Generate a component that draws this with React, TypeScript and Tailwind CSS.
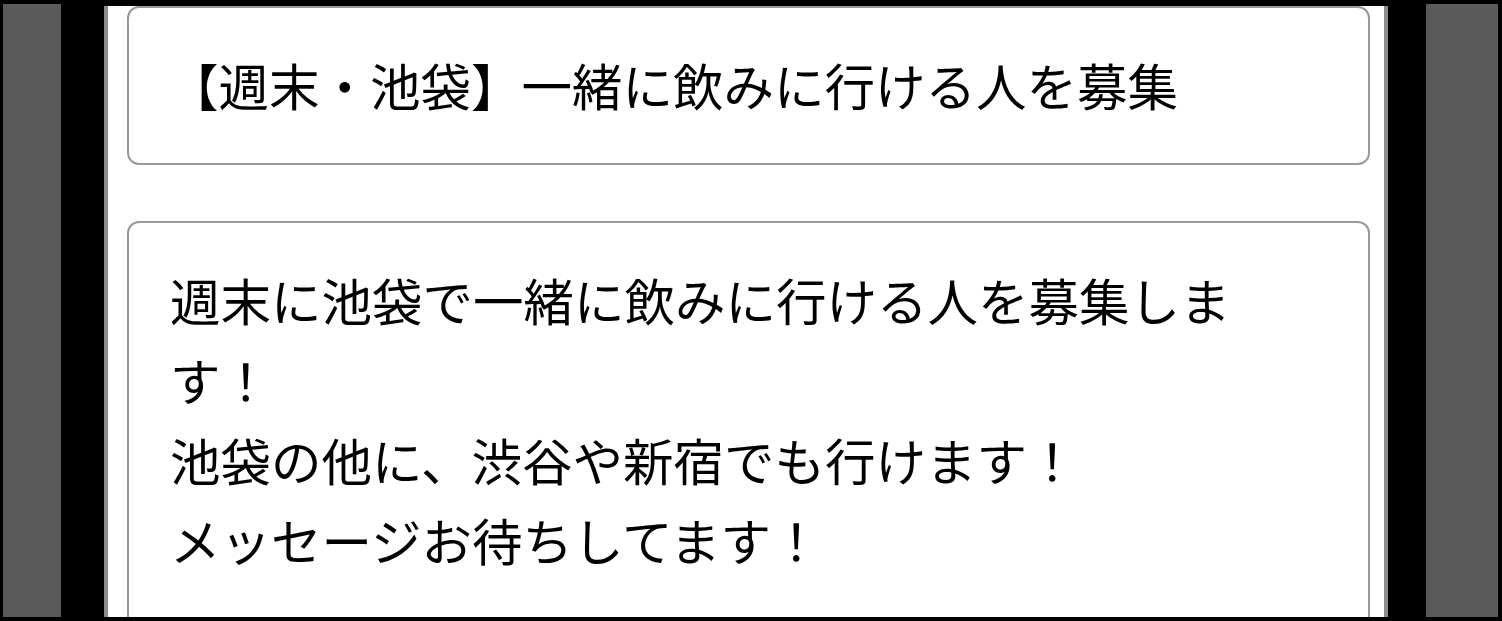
import React from "react";

const font = { fontFamily: '"Noto Sans CJK JP", "Noto Sans", sans-serif' };

export default function App() {
  return (
    <div className="w-[1502px] h-[621px] bg-black pt-[4px] pl-[3px] pr-[4px] pb-[4px] overflow-hidden" style={font}>
      <div className="h-full bg-[#5a5a5a] pl-[58px]">
        {/* 端末フレーム */}
        <div className="w-[1365px] h-full bg-black pl-[43px] pr-[38px] pt-[2px]">
          <div className="h-full bg-white border-x-4 border-[#8c8c8c] pl-[19px] pr-[14px] overflow-hidden">
            {/* タイトル */}
            <div className="h-[159px] border-2 border-[#999999] rounded-[12px] pl-[39px] pb-[3px] flex items-center">
              <h1 className="text-[50.5px] leading-none text-black font-normal">
                【週末・池袋】一緒に飲みに行ける人を募集
              </h1>
            </div>

            {/* 本文 */}
            <div className="mt-[56px] h-[420px] border-2 border-[#999999] rounded-[12px] pl-[41px] pt-[36px]">
              <p className="w-[1080px] text-[50.5px] leading-[80px] text-black">
                週末に池袋で一緒に飲みに行ける人を募集します！
                <br />
                池袋の他に、渋谷や新宿でも行けます！
                <br />
                メッセージお待ちしてます！
              </p>
            </div>
          </div>
        </div>
      </div>
    </div>
  );
}
